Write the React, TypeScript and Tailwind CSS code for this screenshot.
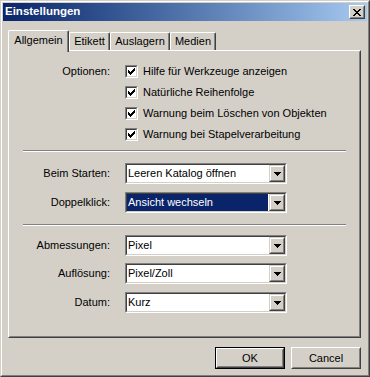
import { clsx } from 'clsx'

const CHECK_COLS: [number, number][] = [[2, 3], [3, 3], [4, 3], [3, 3], [2, 3], [1, 3], [0, 3]]
const X_ROWS: [number, number][][] = [
  [[0, 2], [6, 2]],
  [[1, 2], [5, 2]],
  [[2, 4]],
  [[3, 2]],
  [[2, 4]],
  [[1, 2], [5, 2]],
  [[0, 2], [6, 2]],
]

function CheckMark() {
  return (
    <svg width="7" height="7" viewBox="0 0 7 7" shapeRendering="crispEdges">
      {CHECK_COLS.map(([y, h], x) => (
        <rect key={x} x={x} y={y} width="1" height={h} fill="#000" />
      ))}
    </svg>
  )
}

function CloseGlyph() {
  return (
    <svg width="8" height="7" viewBox="0 0 8 7" shapeRendering="crispEdges">
      {X_ROWS.map((segs, y) =>
        segs.map(([x, w], i) => <rect key={`${y}-${i}`} x={x} y={y} width={w} height="1" fill="#000" />),
      )}
    </svg>
  )
}

function Arrow() {
  return (
    <svg width="7" height="4" viewBox="0 0 7 4" shapeRendering="crispEdges">
      <rect x="0" y="0" width="7" height="1" fill="#000" />
      <rect x="1" y="1" width="5" height="1" fill="#000" />
      <rect x="2" y="2" width="3" height="1" fill="#000" />
      <rect x="3" y="3" width="1" height="1" fill="#000" />
    </svg>
  )
}

function Checkbox({ label }: { label: string }) {
  return (
    <div className="flex h-[21px] items-center">
      <div className="h-[13px] w-[13px] border border-t-[#808080] border-l-[#808080] border-r-white border-b-white">
        <div className="flex h-full w-full items-center justify-center border border-t-[#404040] border-l-[#404040] border-r-[#d4d0c8] border-b-[#d4d0c8] bg-white">
          <CheckMark />
        </div>
      </div>
      <span className="ml-[5px] whitespace-nowrap">{label}</span>
    </div>
  )
}

function Combo({ value, selected }: { value: string; selected?: boolean }) {
  return (
    <div className="h-[21px] w-[162px] border border-t-[#808080] border-l-[#808080] border-r-white border-b-white">
      <div className="flex h-full border border-t-[#404040] border-l-[#404040] border-r-[#d4d0c8] border-b-[#d4d0c8] bg-white">
        <div className="flex min-w-0 flex-1 pr-[1px]">
          <div className={clsx('flex h-full flex-1 items-center whitespace-nowrap pl-[1px]', selected && 'bg-[#0a246a] text-white')}>
            {value}
          </div>
        </div>
        <div className="h-full w-[16px] border border-t-[#d4d0c8] border-l-[#d4d0c8] border-r-[#404040] border-b-[#404040]">
          <div className="flex h-full items-center justify-center border border-t-white border-l-white border-r-[#808080] border-b-[#808080] bg-[#d4d0c8]">
            <Arrow />
          </div>
        </div>
      </div>
    </div>
  )
}

function Field({ label, className, children }: { label: string; className?: string; children: React.ReactNode }) {
  return (
    <div className={clsx('flex items-center', className)}>
      <div className="w-[87px] text-right whitespace-nowrap">{label}</div>
      <div className="ml-[15px]">{children}</div>
    </div>
  )
}

function Separator({ className }: { className?: string }) {
  return <div className={clsx('h-[2px] border-t border-b border-t-[#808080] border-b-white', className)} />
}

function Button({ children, isDefault }: { children: React.ReactNode; isDefault?: boolean }) {
  return (
    <div className={clsx('h-[22px] w-[70px]', isDefault && 'border border-black')}>
      <div className="h-full border border-t-white border-l-white border-r-[#404040] border-b-[#404040]">
        <div className="flex h-full items-center justify-center border border-t-[#d4d0c8] border-l-[#d4d0c8] border-r-[#808080] border-b-[#808080]">
          {children}
        </div>
      </div>
    </div>
  )
}

const TABS = [
  { label: 'Etikett', w: 'w-[41px]' },
  { label: 'Auslagern', w: 'w-[60px]' },
  { label: 'Medien', w: 'w-[46px]' },
]

export default function App() {
  return (
    <div className="h-[377px] w-[370px] border border-t-[#d4d0c8] border-l-[#d4d0c8] border-r-[#404040] border-b-[#404040] bg-[#d4d0c8] font-['Liberation_Sans',Arial,sans-serif] text-[11px] text-black">
      <div className="flex h-full flex-col border border-t-white border-l-white border-r-[#808080] border-b-[#808080] p-[1px]">
        {/* Title bar */}
        <div className="flex h-[18px] items-center bg-linear-to-r from-[#0a246a] to-[#a6caf0] pl-[2px] pr-[2px]">
          <span className="flex-1 text-[11.5px] font-bold text-white">Einstellungen</span>
          <div className="h-[14px] w-[16px] border border-t-white border-l-white border-r-[#404040] border-b-[#404040] bg-[#d4d0c8]">
            <div className="flex h-full items-center justify-center border border-t-[#d4d0c8] border-l-[#d4d0c8] border-r-[#808080] border-b-[#808080] pr-[1px]">
              <CloseGlyph />
            </div>
          </div>
        </div>

        <div className="pl-[5px] pr-[6px]">
          {/* Tabs */}
          <div className="mt-[9px] flex h-[20px] items-end">
            <div className="relative z-10 -mb-[2px] flex h-[22px] w-[61px] items-center justify-center rounded-tl-[2px] rounded-tr-[2px] border-t border-l border-r border-t-white border-l-white border-r-[#404040] bg-[#d4d0c8] pb-[2px] shadow-[inset_-1px_0_0_#808080]">
              Allgemein
            </div>
            {TABS.map((t) => (
              <div
                key={t.label}
                className={clsx(
                  'flex h-[18px] items-center justify-center rounded-tl-[2px] rounded-tr-[2px] border-t border-l border-r border-t-white border-l-white border-r-[#404040] shadow-[inset_-1px_0_0_#808080]',
                  t.w,
                )}
              >
                {t.label}
              </div>
            ))}
          </div>

          {/* Panel */}
          <div className="h-[288px] w-[353px] border border-t-white border-l-white border-r-[#404040] border-b-[#404040]">
            <div className="h-full border border-t-[#d4d0c8] border-l-[#d4d0c8] border-r-[#808080] border-b-[#808080] px-[13px] pt-[9px]">
              <div className="flex">
                <div className="flex h-[21px] w-[87px] items-center justify-end">Optionen:</div>
                <div className="ml-[15px]">
                  <Checkbox label="Hilfe für Werkzeuge anzeigen" />
                  <Checkbox label="Natürliche Reihenfolge" />
                  <Checkbox label="Warnung beim Löschen von Objekten" />
                  <Checkbox label="Warnung bei Stapelverarbeitung" />
                </div>
              </div>

              <Separator className="mt-[5px]" />

              <Field label="Beim Starten:" className="mt-[11px]">
                <Combo value="Leeren Katalog öffnen" />
              </Field>
              <Field label="Doppelklick:" className="mt-[8px]">
                <Combo value="Ansicht wechseln" selected />
              </Field>

              <Separator className="mt-[11px]" />

              <Field label="Abmessungen:" className="mt-[9px]">
                <Combo value="Pixel" />
              </Field>
              <Field label="Auflösung:" className="mt-[7px]">
                <Combo value="Pixel/Zoll" />
              </Field>
              <Field label="Datum:" className="mt-[8px]">
                <Combo value="Kurz" />
              </Field>
            </div>
          </div>

          {/* Buttons */}
          <div className="mt-[9px] flex justify-end gap-[6px]">
            <Button isDefault>OK</Button>
            <Button>Cancel</Button>
          </div>
        </div>
      </div>
    </div>
  )
}
